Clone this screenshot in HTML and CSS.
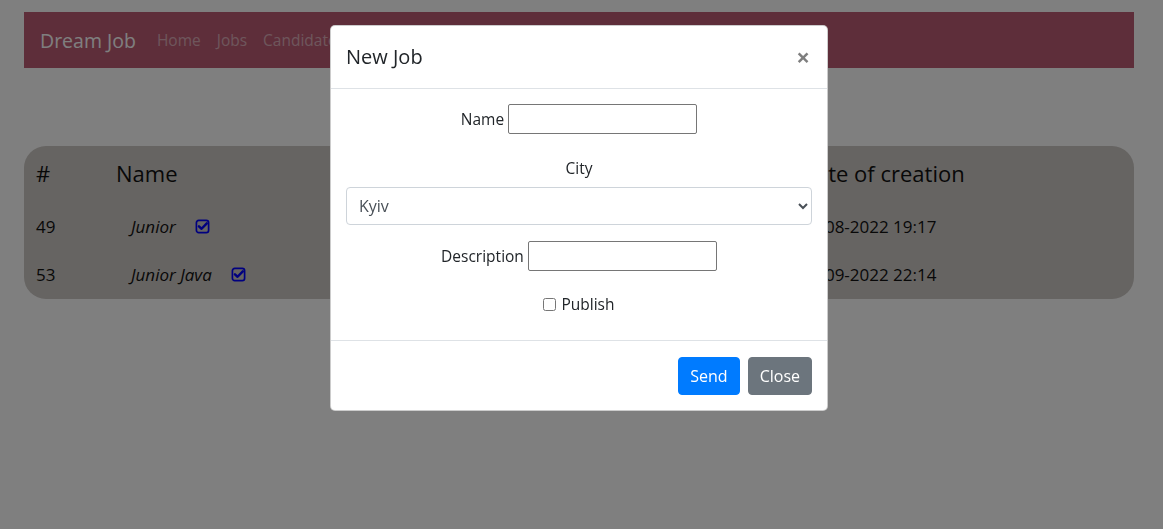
FILE: index.html
```html
<!DOCTYPE html>
<html lang="en">
<head>
<meta charset="utf-8">
<title>Dream Job</title>
<link rel="stylesheet" href="styles.css">
</head>
<body>
<div class="page">
  <nav class="navbar">
    <a class="brand" href="#">Dream Job</a>
    <a class="nav-link" href="#">Home</a>
    <a class="nav-link" href="#">Jobs</a>
    <a class="nav-link" href="#">Candidates</a>
  </nav>

  <div class="card">
    <div class="row head">
      <div class="c-id">#</div>
      <div class="c-name">Name</div>
      <div class="c-date">Date of creation</div>
    </div>
    <div class="row">
      <div class="c-id">49</div>
      <div class="c-name"><span class="job">Junior</span>
        <svg class="chk" viewBox="0 0 16 16" width="15" height="15"><rect x="1.5" y="1.5" width="13" height="13" rx="2.5" fill="none" stroke="#0000ff" stroke-width="1.8"/><path d="M4.2 7.8 L7 10.4 L12.6 4.6" fill="none" stroke="#0000ff" stroke-width="2.6" stroke-linecap="round" stroke-linejoin="round"/></svg>
      </div>
      <div class="c-date">25-08-2022 19:17</div>
    </div>
    <div class="row">
      <div class="c-id">53</div>
      <div class="c-name"><span class="job">Junior Java</span>
        <svg class="chk" viewBox="0 0 16 16" width="15" height="15"><rect x="1.5" y="1.5" width="13" height="13" rx="2.5" fill="none" stroke="#0000ff" stroke-width="1.8"/><path d="M4.2 7.8 L7 10.4 L12.6 4.6" fill="none" stroke="#0000ff" stroke-width="2.6" stroke-linecap="round" stroke-linejoin="round"/></svg>
      </div>
      <div class="c-date">01-09-2022 22:14</div>
    </div>
  </div>
</div>

<div class="backdrop"></div>

<div class="modal">
  <div class="modal-header">
    <h5 class="modal-title">New Job</h5>
    <button class="close" type="button">×</button>
  </div>
  <div class="modal-body">
    <div class="field">
      <label for="name">Name</label>
      <input id="name" class="plain" type="text">
    </div>
    <div class="city-label">City</div>
    <select class="custom-select">
      <option>Kyiv</option>
    </select>
    <div class="field desc">
      <label for="desc">Description</label>
      <input id="desc" class="plain" type="text">
    </div>
    <div class="publish">
      <input id="pub" type="checkbox"><label for="pub">Publish</label>
    </div>
  </div>
  <div class="modal-footer">
    <button class="btn btn-primary" type="button">Send</button>
    <button class="btn btn-secondary" type="button">Close</button>
  </div>
</div>
</body>
</html>
```

FILE: styles.css
```css
* { box-sizing: border-box; }

html, body {
  margin: 0;
  background: #ffffff;
  font-family: "Open Sans", "Noto Sans", sans-serif;
}

.page {
  padding: 12px 29px 0 24px;
}

.navbar {
  height: 56px;
  background: #bc5c74;
  display: flex;
  align-items: center;
  padding: 0 16px;
}

.brand {
  color: #ffffff;
  font-size: 19.5px;
  text-decoration: none;
  margin-right: 13px;
}

.nav-link {
  color: rgba(255, 255, 255, 0.5);
  font-size: 15.5px;
  text-decoration: none;
  padding: 0 8px;
}

.card {
  margin-top: 78px;
  background: #ccc8c4;
  border-radius: 22px;
  height: 153px;
  padding: 10px 0 0 12px;
  color: #111;
}

.row {
  display: grid;
  grid-template-columns: 80px 684px auto;
  height: 48px;
  align-items: center;
  font-size: 17px;
}

.row.head {
  height: 34px;
  font-size: 22px;
  margin-bottom: 12px;
}

.row:not(.head) .c-name {
  padding-left: 15px;
  display: flex;
  align-items: center;
}

.job {
  font-style: italic;
  margin-right: 19px;
}

.chk { display: block; }

.backdrop {
  position: fixed;
  inset: 0;
  background: rgba(0, 0, 0, 0.5);
}

.modal {
  position: fixed;
  top: 25px;
  left: 330px;
  width: 498px;
  background: #fff;
  border: 1px solid rgba(0, 0, 0, 0.2);
  border-radius: 5px;
  color: #212529;
}

.modal-header {
  height: 63px;
  display: flex;
  align-items: center;
  justify-content: space-between;
  padding: 0 15px;
  border-bottom: 1px solid #dee2e6;
}

.modal-title {
  margin: 0;
  font-size: 20px;
  font-weight: 500;
  line-height: 30px;
}

.close {
  background: none;
  border: 0;
  padding: 0;
  font-size: 24px;
  font-weight: 700;
  line-height: 1;
  color: #000;
  opacity: 0.5;
  font-family: "Open Sans", sans-serif;
  margin-right: 2px;
}

.modal-body {
  padding: 15px 15px 24px;
  display: flex;
  flex-direction: column;
  align-items: center;
  font-size: 15.5px;
}

.field {
  display: flex;
  align-items: center;
  gap: 4px;
  height: 30px;
}

.plain {
  width: 189px;
  height: 30px;
  border: 1px solid #767676;
  border-radius: 2px;
  font: inherit;
  padding: 1px 2px;
}

.city-label {
  margin-top: 22px;
  line-height: 24px;
}

.custom-select {
  margin-top: 7px;
  width: 100%;
  height: 38px;
  border: 1px solid #ced4da;
  border-radius: 4px;
  background: #fff;
  color: #495057;
  font: inherit;
  font-size: 16px;
  padding: 0 8px;
}

.desc {
  margin-top: 16px;
}

.publish {
  margin-top: 21px;
  line-height: 24px;
  display: flex;
  align-items: center;
  gap: 5px;
}

.publish input { margin: 0; width: 13px; height: 13px; }

.modal-footer {
  border-top: 1px solid #dee2e6;
  padding: 16px 15px 15px;
  display: flex;
  justify-content: flex-end;
  gap: 8px;
}

.btn {
  font: inherit;
  font-size: 16px;
  line-height: 24px;
  padding: 6px 11px;
  border: 1px solid transparent;
  border-radius: 4px;
  color: #fff;
}

.btn-primary { background: #007bff; border-color: #007bff; }
.btn-secondary { background: #6c757d; border-color: #6c757d; }
```
